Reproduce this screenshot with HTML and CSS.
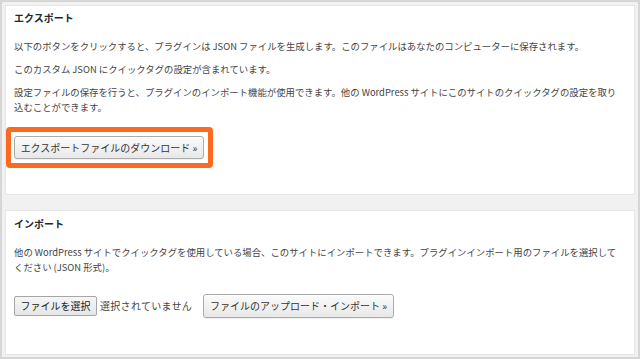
FILE: index.html
```html
<!DOCTYPE html>
<html lang="ja">
<head>
<meta charset="utf-8">
<title>エクスポート / インポート</title>
<link rel="stylesheet" href="styles.css">
</head>
<body>
<div class="frame">
  <section class="card card-export">
    <h2 class="card-title">エクスポート</h2>
    <div class="card-body">
      <p>以下のボタンをクリックすると、プラグインは JSON ファイルを生成します。このファイルはあなたのコンピューターに保存されます。</p>
      <p>このカスタム JSON にクイックタグの設定が含まれています。</p>
      <p>設定ファイルの保存を行うと、プラグインのインポート機能が使用できます。他の WordPress サイトにこのサイトのクイックタグの設定を取り込むことができます。</p>
    </div>
    <div class="highlight">
      <button class="btn btn-export" type="button">エクスポートファイルのダウンロード »</button>
    </div>
  </section>
  <section class="card card-import">
    <h2 class="card-title">インポート</h2>
    <div class="card-body">
      <p>他の WordPress サイトでクイックタグを使用している場合、このサイトにインポートできます。プラグインインポート用のファイルを選択してください (JSON 形式)。</p>
    </div>
    <div class="upload-row">
      <span class="file-btn">ファイルを選択</span>
      <span class="file-name">選択されていません</span>
      <button class="btn btn-upload" type="button">ファイルのアップロード・インポート »</button>
    </div>
  </section>
</div>
</body>
</html>
```
FILE: styles.css
```css
html, body {
  margin: 0;
  padding: 0;
}
body {
  font-family: "Noto Sans CJK JP", "Noto Sans", sans-serif;
  color: #444;
  background: #f1f1f1;
}
.frame {
  box-sizing: border-box;
  width: 640px;
  height: 359px;
  overflow: hidden;
  border: 2px solid #d6d6d6;
  background: #f1f1f1;
  padding: 3px;
  display: flex;
  flex-direction: column;
  gap: 15px;
}
.card {
  background: #fff;
  border: 1px solid #e5e5e5;
  padding: 5px 14px 26px 8px;
}
.card-import {
  padding-top: 6px;
  padding-bottom: 36px;
}
.card-title {
  margin: 0 0 14px;
  font-size: 10px;
  line-height: 14px;
  font-weight: 700;
  color: #23282d;
}
.card-body {
  display: flex;
  flex-direction: column;
  gap: 8px;
}
.card-body p {
  margin: 0;
  font-size: 9.4px;
  line-height: 15px;
  color: #444;
}
.highlight {
  display: inline-block;
  margin: 12px 0 0 -8px;
  border: 5px solid #fb6a1e;
  border-radius: 4px;
  padding: 4px 4px 4px 3px;
  background: #fff;
}
.btn {
  display: block;
  box-sizing: border-box;
  font-family: "Noto Sans CJK JP", "Noto Sans", sans-serif;
  font-size: 10px;
  color: #333;
  border: 1px solid #ababab;
  border-radius: 3px;
  background: linear-gradient(#fbfbfb, #e8e8e8);
  box-shadow: inset 0 1px 0 #fff, 0 1px 0 rgba(0,0,0,0.06);
  padding: 0 4px;
  margin: 0;
  white-space: nowrap;
}
.btn-export {
  width: 190px;
  height: 23px;
  line-height: 21px;
}
.btn-upload {
  width: 191px;
  height: 24px;
  line-height: 22px;
  padding: 0 5px;
}
.upload-row {
  margin-top: 19px;
  display: flex;
  align-items: center;
}
.file-btn {
  box-sizing: border-box;
  width: 83px;
  height: 20px;
  line-height: 18px;
  font-size: 10px;
  color: #222;
  text-align: center;
  border: 1px solid #a6a6a6;
  border-radius: 2px;
  background: linear-gradient(#f6f6f6, #e6e6e6);
}
.file-name {
  margin-left: 3px;
  margin-right: 11px;
  font-size: 10px;
  letter-spacing: 0.3px;
  line-height: 20px;
  color: #444;
}
```
